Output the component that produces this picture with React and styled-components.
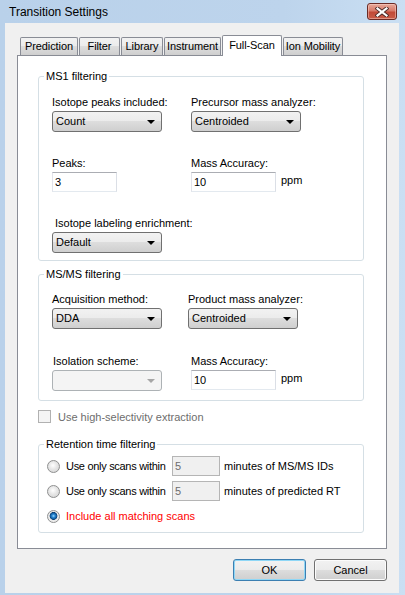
import React from "react"
import styled, { createGlobalStyle } from "styled-components"

const GlobalStyle = createGlobalStyle`
  html, body {
    margin: 0;
    padding: 0;
    background: #b9d1ea;
  }
  body {
    font-family: "Liberation Sans", Arial, sans-serif;
    font-size: 11px;
    color: #000;
  }
  * {
    box-sizing: border-box;
  }
`

const Window = styled.div`
  width: 405px;
  height: 595px;
  display: flex;
  flex-direction: column;
  padding: 0 6px 2px 5px;
  background: linear-gradient(to right, #b9d1ea 0%, #bdd4ec 70%, #cadff3 100%);
`

const TitleBar = styled.div`
  height: 23px;
  display: flex;
  align-items: center;
  justify-content: space-between;
`

const Title = styled.span`
  padding-left: 4px;
  font-size: 12px;
  line-height: 14px;
`

const CloseButton = styled.div`
  align-self: flex-start;
  margin-top: 3px;
  margin-right: 2px;
  width: 30px;
  height: 17px;
  border: 1px solid #6b2b26;
  border-radius: 3px;
  display: flex;
  align-items: center;
  justify-content: center;
  background: linear-gradient(#e8a99b 0%, #d77a6a 45%, #c14a38 55%, #c95c48 100%);
  box-shadow: inset 0 0 0 1px rgba(255, 220, 210, 0.45);
`

const Client = styled.div`
  flex: 1;
  background: #f0f0f0;
  padding: 12px 12px 0 12px;
  display: flex;
  flex-direction: column;
`

const TabStrip = styled.div`
  height: 20px;
  display: flex;
  align-items: flex-end;
  padding-left: 3px;
`

const Tab = styled.div`
  position: relative;
  z-index: ${(p) => (p.$active ? 2 : 0)};
  width: ${(p) => p.$w}px;
  height: ${(p) => (p.$active ? 21 : 18)}px;
  margin-right: 1px;
  margin-bottom: ${(p) => (p.$active ? -1 : 0)}px;
  border: 1px solid #898c95;
  border-bottom: none;
  border-radius: 2px 2px 0 0;
  background: ${(p) =>
    p.$active ? "#ffffff" : "linear-gradient(#f2f2f2 0%, #ebebeb 50%, #dddddd 50%, #cfcfcf 100%)"};
  display: flex;
  justify-content: center;
  padding-top: ${(p) => (p.$active ? 3 : 2)}px;
  line-height: 13px;
  white-space: nowrap;
  letter-spacing: -0.1px;
`

const Panel = styled.div`
  position: relative;
  z-index: 1;
  width: 370px;
  height: 494px;
  background: #fff;
  border: 1px solid #898c95;
  padding-left: 20px;
  display: flex;
  flex-direction: column;
`

const GroupBox = styled.fieldset`
  margin: ${(p) => p.$top}px 0 0 0;
  padding: 0;
  width: 326px;
  min-width: 0;
  border: 1px solid #d5dfe5;
  border-radius: 3px;
`

const Legend = styled.legend`
  margin-left: 5px;
  padding: 0 2px;
  line-height: 14px;
  font-size: 11px;
`

const FieldGrid = styled.div`
  display: grid;
  grid-template-columns: ${(p) => p.$col}px auto;
  row-gap: ${(p) => p.$gap}px;
  padding: ${(p) => p.$pt}px 0 ${(p) => p.$pb}px 13px;
`

const Field = styled.div`
  display: flex;
  flex-direction: column;
  align-items: flex-start;
  gap: 2px;
  grid-column: ${(p) => (p.$span ? "1 / -1" : "auto")};
  margin-left: ${(p) => p.$shift || 0}px;
`

const Label = styled.span`
  line-height: 13px;
  padding-left: ${(p) => p.$indent || 0}px;
  white-space: nowrap;
`

const Combo = styled.div`
  width: ${(p) => p.$w}px;
  height: 21px;
  border: 1px solid ${(p) => (p.$disabled ? "#adb2b5" : "#707070")};
  border-radius: 3px;
  background: ${(p) =>
    p.$disabled
      ? "#f4f4f4"
      : "linear-gradient(#f2f2f2 0%, #ebebeb 50%, #dddddd 50%, #cfcfcf 100%)"};
  display: flex;
  align-items: center;
  justify-content: space-between;
  padding: 0 6px 0 3px;
  line-height: 13px;
`

const Arrow = styled.span`
  width: 0;
  height: 0;
  border-left: 4px solid transparent;
  border-right: 4px solid transparent;
  border-top: 4px solid ${(p) => (p.$disabled ? "#a6a6a6" : "#000")};
`

const InputRow = styled.div`
  display: flex;
  align-items: flex-start;
`

const TextBox = styled.input`
  width: ${(p) => p.$w}px;
  height: 20px;
  margin: 0;
  padding: 0 2px;
  font: inherit;
  font-size: 11px;
  color: ${(p) => (p.disabled ? "#6d6d6d" : "#000")};
  background: ${(p) => (p.disabled ? "#f0f0f0" : "#fff")};
  border: 1px solid;
  border-color: ${(p) =>
    p.disabled ? "#b5b5b5" : "#abadb3 #dbdfe6 #e3e9ef #e2e3ea"};
  outline: none;
`

const Unit = styled.span`
  margin-left: 5px;
  padding-top: 2px;
  line-height: 13px;
`

const CheckRow = styled.div`
  height: 13px;
  margin-top: 9px;
  display: flex;
  align-items: center;
  color: #6d6d6d;
`

const CheckBox = styled.span`
  width: 13px;
  height: 13px;
  margin-right: 7px;
  border: 1px solid #b1b1b1;
  background: #f4f4f4;
`

const RadioList = styled.div`
  display: flex;
  flex-direction: column;
  gap: 5px;
  padding: 5px 0 6px 8px;
`

const RadioRow = styled.div`
  height: 20px;
  display: flex;
  align-items: center;
  color: ${(p) => (p.$red ? "#ff0000" : "#000")};
`

const Radio = styled.span`
  width: 13px;
  height: 13px;
  margin-right: 6px;
  border-radius: 50%;
  border: 1px solid #8e8f8f;
  background: ${(p) =>
    p.$checked
      ? "radial-gradient(circle at 50% 45%, #9fdcff 0, #2b8ad6 1.5px, #0f5b9e 3px, #0a3f72 3.6px, #e9e9e9 4.2px, #f6f6f6 100%)"
      : "radial-gradient(circle at 45% 40%, #ffffff 0, #e6e6e6 4px, #d0d0d0 100%)"};
`

const RadioText = styled.span`
  width: ${(p) => (p.$w ? `${p.$w}px` : "auto")};
  white-space: nowrap;
  line-height: 13px;
  letter-spacing: ${(p) => (p.$w ? "-0.3px" : "0")};
`

const Trail = styled.span`
  margin-left: 4px;
  white-space: nowrap;
  line-height: 13px;
`

const ButtonRow = styled.div`
  display: flex;
  justify-content: flex-end;
  gap: 8px;
  margin-top: 10px;
`

const Button = styled.div`
  width: 73px;
  height: 22px;
  border: 1px solid ${(p) => (p.$default ? "#3c7fb1" : "#707070")};
  border-radius: 3px;
  display: flex;
  align-items: center;
  justify-content: center;
  background: linear-gradient(#f2f2f2 0%, #ebebeb 50%, #dddddd 50%, #cfcfcf 100%);
  box-shadow: ${(p) =>
    p.$default ? "inset 0 0 0 1px #8fd7f6" : "inset 0 0 0 1px #fcfcfc"};
`

const CloseGlyph = () => (
  <svg width="14" height="10" viewBox="0 0 14 10">
    <path d="M2.5 1.5 L11.5 8.5 M11.5 1.5 L2.5 8.5" stroke="#4a2a28" strokeWidth="4" strokeLinecap="square" />
    <path d="M2.5 1.5 L11.5 8.5 M11.5 1.5 L2.5 8.5" stroke="#ffffff" strokeWidth="2.2" strokeLinecap="square" />
  </svg>
)

const tabs = [
  { name: "Prediction", w: 58 },
  { name: "Filter", w: 41 },
  { name: "Library", w: 42 },
  { name: "Instrument", w: 57 },
  { name: "Full-Scan", w: 60, active: true },
  { name: "Ion Mobility", w: 60 },
]

const Select = ({ value, w = 110, disabled }) => (
  <Combo $w={w} $disabled={disabled}>
    <span>{value}</span>
    <Arrow $disabled={disabled} />
  </Combo>
)

const App = () => (
  <>
    <GlobalStyle />
    <Window>
      <TitleBar>
        <Title>Transition Settings</Title>
        <CloseButton>
          <CloseGlyph />
        </CloseButton>
      </TitleBar>
      <Client>
        <TabStrip>
          {tabs.map((t) => (
            <Tab key={t.name} $w={t.w} $active={t.active}>
              {t.name}
            </Tab>
          ))}
        </TabStrip>
        <Panel>
          <GroupBox $top={13}>
            <Legend>MS1 filtering</Legend>
            <FieldGrid $col={139} $gap={25} $pt={13} $pb={7}>
              <Field>
                <Label>Isotope peaks included:</Label>
                <Select value="Count" />
              </Field>
              <Field>
                <Label>Precursor mass analyzer:</Label>
                <Select value="Centroided" />
              </Field>
              <Field>
                <Label>Peaks:</Label>
                <TextBox $w={65} defaultValue="3" />
              </Field>
              <Field>
                <Label>Mass Accuracy:</Label>
                <InputRow>
                  <TextBox $w={85} defaultValue="10" />
                  <Unit>ppm</Unit>
                </InputRow>
              </Field>
              <Field $span>
                <Label $indent={3}>Isotope labeling enrichment:</Label>
                <Select value="Default" />
              </Field>
            </FieldGrid>
          </GroupBox>

          <GroupBox $top={6}>
            <Legend>MS/MS filtering</Legend>
            <FieldGrid $col={136} $gap={26} $pt={12} $pb={9}>
              <Field>
                <Label>Acquisition method:</Label>
                <Select value="DDA" />
              </Field>
              <Field>
                <Label>Product mass analyzer:</Label>
                <Select value="Centroided" />
              </Field>
              <Field>
                <Label $indent={1}>Isolation scheme:</Label>
                <Select value="" disabled />
              </Field>
              <Field $shift={3}>
                <Label>Mass Accuracy:</Label>
                <InputRow>
                  <TextBox $w={85} defaultValue="10" />
                  <Unit>ppm</Unit>
                </InputRow>
              </Field>
            </FieldGrid>
          </GroupBox>

          <CheckRow>
            <CheckBox />
            Use high-selectivity extraction
          </CheckRow>

          <GroupBox $top={14}>
            <Legend>Retention time filtering</Legend>
            <RadioList>
              <RadioRow>
                <Radio />
                <RadioText $w={106}>Use only scans within</RadioText>
                <TextBox $w={48} defaultValue="5" disabled />
                <Trail>minutes of MS/MS IDs</Trail>
              </RadioRow>
              <RadioRow>
                <Radio />
                <RadioText $w={106}>Use only scans within</RadioText>
                <TextBox $w={48} defaultValue="5" disabled />
                <Trail>minutes of predicted RT</Trail>
              </RadioRow>
              <RadioRow $red>
                <Radio $checked />
                <RadioText>Include all matching scans</RadioText>
              </RadioRow>
            </RadioList>
          </GroupBox>
        </Panel>
        <ButtonRow>
          <Button $default>OK</Button>
          <Button>Cancel</Button>
        </ButtonRow>
      </Client>
    </Window>
  </>
)

export default App
